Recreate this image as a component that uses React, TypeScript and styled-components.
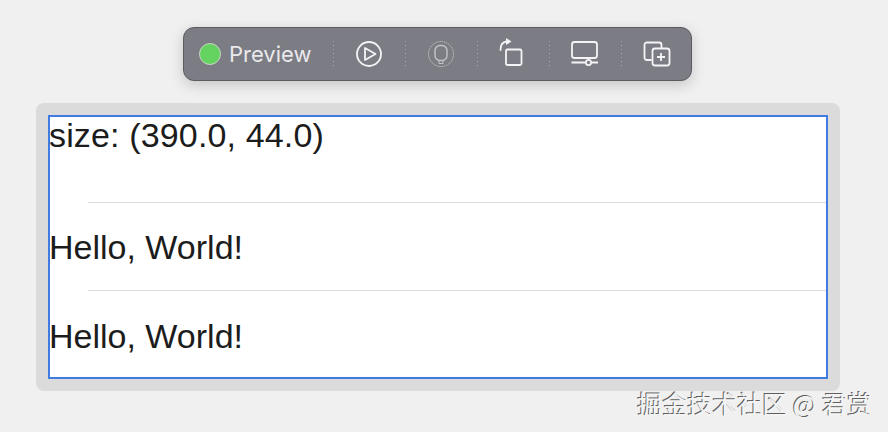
import React from "react";
import styled, { createGlobalStyle } from "styled-components";

const GlobalStyle = createGlobalStyle`
  html, body {
    margin: 0;
    padding: 0;
    background: #f0f0f0;
  }
  body {
    width: 888px;
    height: 432px;
    overflow: hidden;
    font-family: "Liberation Sans", Arial, sans-serif;
  }
`;

const Page = styled.div`
  width: 888px;
  height: 432px;
  position: relative;
  display: flex;
  flex-direction: column;
  align-items: flex-start;
  padding: 27px 0 0 36px;
  box-sizing: border-box;
  background: #f0f0f0;
`;

const Toolbar = styled.div`
  width: 509px;
  height: 54px;
  box-sizing: border-box;
  margin-left: 147px;
  display: flex;
  align-items: center;
  background: #7c7c84;
  border: 1.5px solid #5b5b60;
  border-radius: 11px;
  box-shadow: 0 4px 14px rgba(0, 0, 0, 0.18);
  color: #f1f1f3;
`;

const Status = styled.div`
  display: flex;
  flex: none;
  align-items: center;
  gap: 8px;
  width: 149px;
  padding-left: 15px;
  box-sizing: border-box;
`;

const Dot = styled.span`
  width: 22px;
  height: 22px;
  border-radius: 50%;
  background: #65d35f;
  border: 1px solid #c9d6c8;
  box-sizing: border-box;
`;

const Label = styled.span`
  font-family: "Inter", "Liberation Sans", sans-serif;
  font-size: 22px;
  font-weight: 400;
  color: #e9e9ec;
`;

const Divider = styled.span`
  flex: none;
  width: 1px;
  height: 26px;
  background: repeating-linear-gradient(to bottom, #a8a8ae 0 1px, transparent 1px 4px);
`;

const ToolSlot = styled.div`
  flex: none;
  width: 71px;
  padding-right: 1px;
  box-sizing: border-box;
  display: flex;
  justify-content: center;
  align-items: center;
`;

const Frame = styled.div`
  margin-top: 22px;
  width: 804px;
  height: 288px;
  box-sizing: border-box;
  padding: 12px;
  background: #dbdbdb;
  border-radius: 8px;
`;

const Screen = styled.div`
  height: 264px;
  box-sizing: border-box;
  background: #fff;
  border: 2px solid #3f7be0;
  display: flex;
  flex-direction: column;
`;

const Row = styled.div<{ $h: number; $top: number; $spacing: number }>`
  height: ${(p) => p.$h}px;
  padding-top: ${(p) => p.$top}px;
  flex: none;
  box-sizing: border-box;
  font-size: 34px;
  line-height: 36px;
  letter-spacing: ${(p) => p.$spacing}px;
  text-indent: -1px;
  color: #1c1c1c;
  white-space: nowrap;
`;

const Separator = styled.div`
  height: 1px;
  flex: none;
  margin-left: 38px;
  background: #dcdcdc;
`;

const Watermark = styled.div`
  position: absolute;
  right: 16px;
  bottom: 14px;
  font-family: "Noto Sans CJK SC", "Liberation Sans", sans-serif;
  font-size: 25px;
  line-height: 30px;
  color: #f4f4f4;
  text-shadow: -1px -1px 0 #5f5f5f;
`;

const PlayIcon = () => (
  <svg width="28" height="28" viewBox="0 0 28 28" fill="none" stroke="#f4f4f6" strokeWidth="1.8">
    <circle cx="14" cy="14" r="12" />
    <path d="M10 8 L20.500 14 L10 20 Z" strokeLinejoin="round" />
  </svg>
);

const DeviceIcon = () => (
  <svg width="28" height="28" viewBox="0 0 28 28" fill="none" stroke="#c4c4c8" strokeWidth="1">
    <circle cx="14" cy="14" r="12.5" strokeDasharray="1.4 0.8" />
    <rect x="8" y="5.500" width="12" height="15" rx="5" strokeWidth="1.4" />
    <path d="M12 20.500v3h4v-3" />
  </svg>
);

const RotateIcon = () => (
  <svg width="28" height="32" viewBox="0 0 28 32" fill="none" stroke="#f4f4f6" strokeWidth="1.8">
    <rect x="7" y="11.500" width="15.500" height="15.500" rx="1.500" />
    <path d="M1.500 12 C1.500 7 3.500 4 7.500 3.500" strokeLinecap="round" />
    <path d="M7 0 L12.500 3.500 L7 7 Z" fill="#f4f4f6" stroke="none" />
  </svg>
);

const DisplayIcon = () => (
  <svg width="30" height="28" viewBox="0 0 30 28" fill="none" stroke="#f4f4f6" strokeWidth="1.8">
    <rect x="2" y="2" width="25" height="16" rx="2.500" />
    <path d="M1.500 22.500 H15.500 M21.500 22.500 H28" />
    <circle cx="18.500" cy="22.500" r="2.600" />
  </svg>
);

const DuplicateIcon = () => (
  <svg width="28" height="28" viewBox="0 0 28 28" fill="none" stroke="#f4f4f6" strokeWidth="1.8">
    <path d="M8.500 20 H4 a2.500 2.500 0 0 1 -2.500 -2.500 V5 A2.500 2.500 0 0 1 4 2.500 H16 A2.500 2.500 0 0 1 18.500 5 V8.500" />
    <rect x="9.500" y="8.500" width="17" height="17" rx="2.500" />
    <path d="M18 13 V21 M14 17 H22" />
  </svg>
);

const App: React.FC = () => {
  return (
    <Page>
      <GlobalStyle />
      <Toolbar>
        <Status>
          <Dot />
          <Label>Preview</Label>
        </Status>
        <Divider />
        <ToolSlot>
          <PlayIcon />
        </ToolSlot>
        <Divider />
        <ToolSlot>
          <DeviceIcon />
        </ToolSlot>
        <Divider />
        <ToolSlot>
          <RotateIcon />
        </ToolSlot>
        <Divider />
        <ToolSlot>
          <DisplayIcon />
        </ToolSlot>
        <Divider />
        <ToolSlot>
          <DuplicateIcon />
        </ToolSlot>
      </Toolbar>
      <Frame>
        <Screen>
          <Row $h={85} $top={0} $spacing={0.15}>
            size: (390.0, 44.0)
          </Row>
          <Separator />
          <Row $h={87} $top={26} $spacing={0}>
            Hello, World!
          </Row>
          <Separator />
          <Row $h={87} $top={27} $spacing={0}>
            Hello, World!
          </Row>
        </Screen>
      </Frame>
      <Watermark>掘金技术社区 @ 君赏</Watermark>
    </Page>
  );
};

export default App;
